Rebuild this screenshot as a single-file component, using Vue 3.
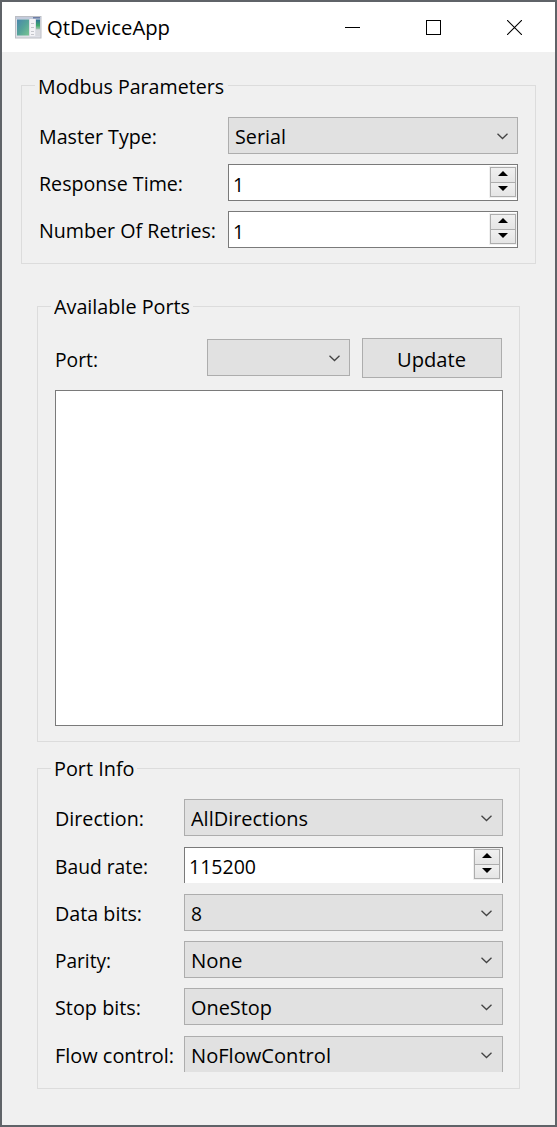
<script setup>
const masterFields = [
  { label: 'Master Type:', lw: 118, kind: 'combo', value: 'Serial', vw: 51 },
  { label: 'Response Time:', lw: 144, kind: 'spin', value: '1', vw: 11 },
  { label: 'Number Of Retries:', lw: 177, kind: 'spin', value: '1', vw: 11 },
]

const portFields = [
  { label: 'Direction:', lw: 89, kind: 'combo', value: 'AllDirections', vw: 117 },
  { label: 'Baud rate:', lw: 93, kind: 'spin', value: '115200', vw: 67, clipped: true },
  { label: 'Data bits:', lw: 87, kind: 'combo', value: '8', vw: 11 },
  { label: 'Parity:', lw: 56, kind: 'combo', value: 'None', vw: 51.5 },
  { label: 'Stop bits:', lw: 86, kind: 'combo', value: 'OneStop', vw: 81 },
  { label: 'Flow control:', lw: 119, kind: 'combo', value: 'NoFlowControl', vw: 140, clipped: true },
]

// Condenses a run of text to the given width in pixels.
const vFit = {
  mounted(el, { value }) {
    const natural = el.getBoundingClientRect().width
    if (natural) el.style.transform = `scaleX(${value / natural})`
  },
}
</script>

<template>
  <div class="window">
    <header class="titlebar">
      <svg class="app-icon" width="27" height="23" viewBox="0 0 27 23">
        <defs>
          <linearGradient id="pane" x1="0" y1="0" x2="1" y2="1">
            <stop offset="0" stop-color="#4a86ad" />
            <stop offset=".5" stop-color="#55a39a" />
            <stop offset="1" stop-color="#78c492" />
          </linearGradient>
          <linearGradient id="strip" x1="0" y1="0" x2="0" y2="1">
            <stop offset="0" stop-color="#2e6f98" />
            <stop offset=".6" stop-color="#3fa96b" />
            <stop offset="1" stop-color="#a9c4b4" />
          </linearGradient>
        </defs>
        <rect x=".5" y=".5" width="25.500" height="21.500" fill="#dddfe6" stroke="#bcbec4" />
        <rect x="1" y="1" width="25" height="2" fill="#c3cbdc" />
        <rect x="18" y="1" width="7" height="1.500" fill="#6d7fa8" />
        <rect x="2" y="3.500" width="12" height="16" fill="url(#pane)" />
        <rect x="15" y="3" width="5" height="17" fill="#f3f3f6" />
        <path d="M16 7.500h3M16 11.500h3M16 15.500h3M16 18.500h3" stroke="#c4c6cc" />
        <rect x="21" y="3.500" width="4" height="10" fill="url(#strip)" />
        <rect x="21" y="14" width="4" height="6" fill="#d8dadf" />
      </svg>
      <span v-fit="123" class="text title">QtDeviceApp</span>
      <div class="controls">
        <svg width="15" height="15" viewBox="0 0 15 15"><path d="M0 7.500h15" stroke="#000" /></svg>
        <svg width="15" height="15" viewBox="0 0 15 15"><rect x=".5" y=".5" width="14" height="14" fill="none" stroke="#000" /></svg>
        <svg width="15" height="15" viewBox="0 0 15 15"><path d="M0 0L15 15M15 0L0 15" stroke="#000" stroke-width="1.100" /></svg>
      </div>
    </header>

    <section class="group master">
      <div class="legend legend-master"><span v-fit="186" class="text">Modbus Parameters</span></div>
      <div v-for="f in masterFields" :key="f.label" class="row">
        <div class="label"><span v-fit="f.lw" class="text">{{ f.label }}</span></div>
        <div class="field" :class="f.kind">
          <span v-fit="f.vw" class="text">{{ f.value }}</span>
          <svg v-if="f.kind === 'combo'" class="chevron" width="11" height="7" viewBox="0 0 11 7"><path d="M.5 .7L5.500 5.500L10.500 .7" /></svg>
          <div v-else class="stepper">
            <i><svg width="10" height="5" viewBox="0 0 10 5"><path d="M0 5L5 0L10 5z" /></svg></i>
            <i><svg width="10" height="5" viewBox="0 0 10 5"><path d="M0 0L5 5L10 0z" /></svg></i>
          </div>
        </div>
      </div>
    </section>

    <section class="group ports">
      <div class="legend legend-ports"><span v-fit="136" class="text">Available Ports</span></div>
      <div class="port-row">
        <div class="label"><span v-fit="43" class="text">Port:</span></div>
        <div class="field combo port-combo">
          <svg class="chevron" width="11" height="7" viewBox="0 0 11 7"><path d="M.5 .7L5.500 5.500L10.500 .7" /></svg>
        </div>
        <button class="update"><span v-fit="69" class="text">Update</span></button>
      </div>
      <div class="list"></div>
    </section>

    <section class="group info">
      <div class="legend legend-info"><span v-fit="80.5" class="text">Port Info</span></div>
      <div v-for="f in portFields" :key="f.label" class="row" :class="{ clipped: f.clipped }">
        <div class="label"><span v-fit="f.lw" class="text">{{ f.label }}</span></div>
        <div class="field" :class="f.kind">
          <span v-fit="f.vw" class="text">{{ f.value }}</span>
          <svg v-if="f.kind === 'combo'" class="chevron" width="11" height="7" viewBox="0 0 11 7"><path d="M.5 .7L5.500 5.500L10.500 .7" /></svg>
          <div v-else class="stepper">
            <i><svg width="10" height="5" viewBox="0 0 10 5"><path d="M0 5L5 0L10 5z" /></svg></i>
            <i><svg width="10" height="5" viewBox="0 0 10 5"><path d="M0 0L5 5L10 0z" /></svg></i>
          </div>
        </div>
      </div>
    </section>
  </div>
</template>

<style>
body {
  margin: 0;
}
</style>

<style scoped>
* {
  box-sizing: border-box;
}
svg {
  display: block;
  flex: none;
}
.window {
  width: 557px;
  height: 1127px;
  border: 2px solid #5f6368;
  background: #f0f0f0;
  color: #000;
  font: 20px/28px "Open Sans", "Noto Sans", sans-serif;
  overflow: hidden;
}
.text {
  display: inline-block;
  flex: none;
  white-space: nowrap;
  transform-origin: 0 50%;
}
.titlebar {
  display: flex;
  align-items: center;
  height: 50px;
  background: #fff;
  padding-left: 13px;
}
.app-icon {
  margin-right: 5px;
}
.title {
  margin-top: 2px;
}
.controls {
  display: flex;
  gap: 66px;
  margin-left: auto;
  margin-right: 33px;
}
.group {
  border: 1px solid #dcdcdc;
  display: flex;
  flex-direction: column;
}
.legend {
  height: 28px;
  margin: -14px 0 0 13px;
  padding-left: 3px;
  background: #f0f0f0;
  flex: none;
}
.legend-master {
  width: 193px;
  padding-top: 1px;
}
.legend-ports { width: 142px; }
.legend-info { width: 86px; }
.master {
  width: 515px;
  height: 179px;
  margin: 33px 0 0 19px;
  padding: 0 17px 0 16px;
}
.master .legend {
  margin-left: -3px;
  margin-bottom: 17px;
}
.row {
  display: flex;
  height: 37px;
  flex: none;
  margin-bottom: 10px;
}
.label {
  height: 37px;
  padding-top: 6px;
}
.master .label {
  width: 190px;
  padding-left: 1px;
}
.field {
  position: relative;
  flex: 1;
  display: flex;
  height: 37px;
}
.field > .text { margin-top: 5px; }
.combo {
  border: 1px solid #adadad;
  background: #e1e1e1;
  padding-left: 6px;
}
.spin {
  border: 1px solid #7a7a7a;
  background: #fff;
  padding-left: 4px;
}
.master .spin > .text { margin-top: 6px; }
.chevron {
  margin: 15px 9px 0 auto;
}
.info .chevron { margin-right: 10px; }
.chevron path {
  fill: none;
  stroke: #444;
  stroke-width: 1.3;
}
.stepper {
  width: 28px;
  height: 32px;
  margin: 1px 0 0 auto;
  padding: 1px;
  background: #f0f0f0;
  display: flex;
  flex-direction: column;
}
.stepper i {
  flex: none;
  width: 26px;
  height: 16px;
  border: 1px solid #adadad;
  background: linear-gradient(#f0f0f0, #e5e5e5);
  display: flex;
  justify-content: center;
  padding-top: 3px;
}
.stepper i + i {
  margin-top: -1px;
  height: 15px;
}
.ports {
  width: 483px;
  height: 436px;
  margin: 42px 0 0 35px;
  padding: 0 16px 0 17px;
}
.ports .legend,
.info .legend {
  margin-left: -4px;
}
.port-row {
  display: flex;
  height: 40px;
  margin-top: 17px;
}
.port-row .label {
  width: 152px;
  padding-top: 8px;
}
.port-combo {
  flex: none;
  width: 143px;
  margin-top: 1px;
}
.update {
  width: 140px;
  height: 40px;
  margin-left: 12px;
  padding: 4px 0 0 34px;
  border: 1px solid #adadad;
  background: #e1e1e1;
  color: #000;
  font: inherit;
  text-align: left;
}
.list {
  height: 336px;
  margin-top: 12px;
  border: 1px solid #7a7a7a;
  background: #fff;
}
.info {
  width: 483px;
  height: 321px;
  margin: 26px 0 0 35px;
  padding: 0 16px 0 17px;
}
.info .legend { margin-bottom: 16px; }
.info .label { width: 129px; }
.info .row:nth-of-type(2),
.info .row:nth-of-type(6) {
  margin-bottom: 11px;
}
.clipped .field {
  height: 36px;
  border-bottom: 0;
}
.info .stepper {
  margin-top: 0;
  margin-right: 1px;
}
</style>
